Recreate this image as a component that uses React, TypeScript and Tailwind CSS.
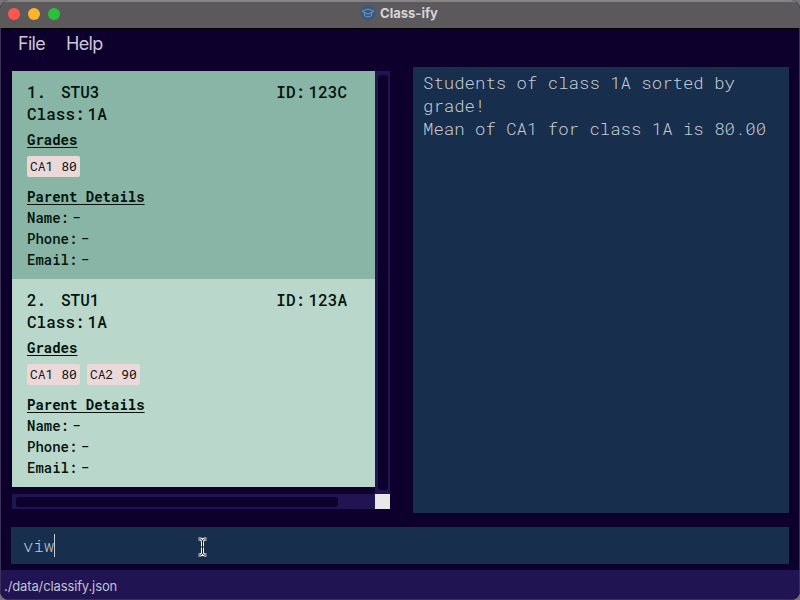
const mono = "font-['Roboto_Mono','Liberation_Mono',monospace]";

type Student = { index: number; name: string; id: string; grades: string[] };

const students: Student[] = [
  { index: 1, name: 'STU3', id: '123C', grades: ['CA1 80'] },
  { index: 2, name: 'STU1', id: '123A', grades: ['CA1 80', 'CA2 90'] },
];

function StudentCard({ student, shade }: { student: Student; shade: string }) {
  return (
    <div className={`h-[208px] pt-[10px] pl-[15px] pr-7 text-[#04120c] ${shade}`}>
      <div className="flex h-[22px] justify-between text-base leading-[22px] font-medium">
        <div className="flex">
          <span className="w-[34px]">{student.index}.</span>
          <span>{student.name}</span>
        </div>
        <div className="flex gap-[3.5px]">
          <span>ID:</span>
          <span>{student.id}</span>
        </div>
      </div>
      <div className="flex h-[22px] gap-[3px] text-base leading-[22px] font-medium">
        <span>Class:</span>
        <span>1A</span>
      </div>
      <div className="mt-1 h-[21px] text-sm leading-[21px] font-bold underline underline-offset-2">Grades</div>
      <div className="mt-[6px] flex h-[21px] gap-[7px]">
        {student.grades.map((g) => (
          <span key={g} className="w-[53px] rounded-[2px] bg-[#ebd9da] pl-[3px] text-[13px] leading-[21px] whitespace-nowrap text-[#151515]">
            {g}
          </span>
        ))}
      </div>
      <div className="mt-[9px] h-[21px] text-sm leading-[21px] font-bold underline underline-offset-2">Parent Details</div>
      {['Name:', 'Phone:', 'Email:'].map((label) => (
        <div key={label} className="flex h-[21px] gap-[3px] text-sm leading-[21px]">
          <span className="font-medium">{label}</span>
          <span className="text-base leading-[19px]">-</span>
        </div>
      ))}
    </div>
  );
}

function TitleBar() {
  return (
    <header className="relative flex h-7 items-center justify-center border-t-2 border-[#858386] bg-[#5b595c]">
      <div className="absolute top-[6px] left-2 flex gap-2">
        <span className="size-3 rounded-full bg-[#ff5650]" />
        <span className="size-3 rounded-full bg-[#fdb42c]" />
        <span className="size-3 rounded-full bg-[#29c13a]" />
      </div>
      <div className="-ml-[2px] flex items-center gap-1 pb-1">
        <svg width="16" height="16" viewBox="0 0 16 16" fill="none">
          <circle cx="8" cy="8" r="7.5" fill="#355983" />
          <path d="M2 6.4 8 3.9l6 2.5L8 9z M4.4 7.8v2.8c1.8 1.6 5.4 1.6 7.2 0V7.8" stroke="#8ba3bd" strokeWidth="0.8" strokeLinejoin="round" />
        </svg>
        <span className="text-[13px] leading-4 font-bold text-[#d6d4d7]">Class-ify</span>
      </div>
    </header>
  );
}

export default function App() {
  return (
    <div className="h-[600px] w-[800px] overflow-hidden bg-[#777579] font-['Inter',sans-serif]">
      <div className="flex h-[600px] flex-col overflow-hidden rounded-[9px] bg-[#0d002d] shadow-[inset_0_0_0_1px_#3b3057]">
        <TitleBar />
        <nav className="mx-px flex h-[39px] gap-[21px] border-t border-black pt-[3px] pl-[17px] text-[18px] leading-6 tracking-[-0.7px] text-[#cbc6d6]">
          <span>File</span>
          <span>Help</span>
        </nav>
        <main className={`flex h-[460px] pr-[11px] pl-3 ${mono}`}>
          <section className="mt-1 w-[378px]">
            <div className="flex h-[423px]">
              <div className="w-[363px]">
                <StudentCard student={students[0]} shade="bg-[#88b5a5]" />
                <StudentCard student={students[1]} shade="bg-[#bad7cb]" />
              </div>
              <div className="w-[15px] bg-[#201452] pt-1 pr-[2px] pb-1 pl-[3px]">
                <div className="h-full rounded-[3px] bg-[#0d002d]" />
              </div>
            </div>
            <div className="flex h-[15px]">
              <div className="w-[363px] bg-[#201452] py-[3px] pl-1">
                <div className="h-[10px] w-[322px] rounded-[3px] bg-[#0d002d]" />
              </div>
              <div className="w-[15px] bg-[#e8e8e8]" />
            </div>
          </section>
          <section className="ml-[23px] h-[446px] w-[376px] bg-[#172e4d] pt-1 pl-[10px] text-[17.33px] leading-[23px] font-light text-[#c4cbd2]">
            <p>
              Students of class 1A sorted by
              <br />
              grade!
            </p>
            <p className="whitespace-nowrap">Mean of CA1 for class 1A is 80.00</p>
          </section>
        </main>
        <div className={`relative mr-[11px] ml-[11px] flex h-[37px] items-center bg-[#172e4d] pl-3 text-[17.33px] font-light text-[#c4cbd2] ${mono}`}>
          <span>viw</span>
          <span className="h-[23px] w-px bg-[#c4cbd2]" />
          <svg className="absolute top-[10px] left-[186px]" width="11" height="20" viewBox="0 0 11 20" fill="none">
            <path d="M1.5 2h2l2 1.5 2-1.5h2M5.5 3.5v13M1.5 18h2l2-1.5 2 1.5h2M4 10h3" stroke="#fff" strokeWidth="3" />
            <path d="M1.5 2h2l2 1.5 2-1.5h2M5.5 3.5v13M1.5 18h2l2-1.5 2 1.5h2M4 10h3" stroke="#111" strokeWidth="1" />
          </svg>
        </div>
        <footer className="mx-px mt-[6px] h-[29px] bg-[#201452] pt-[6px] pl-[3px] text-[13px] leading-5 tracking-[-0.12px] text-[#c4c0d2]">
          ./data/classify.json
        </footer>
      </div>
    </div>
  );
}
